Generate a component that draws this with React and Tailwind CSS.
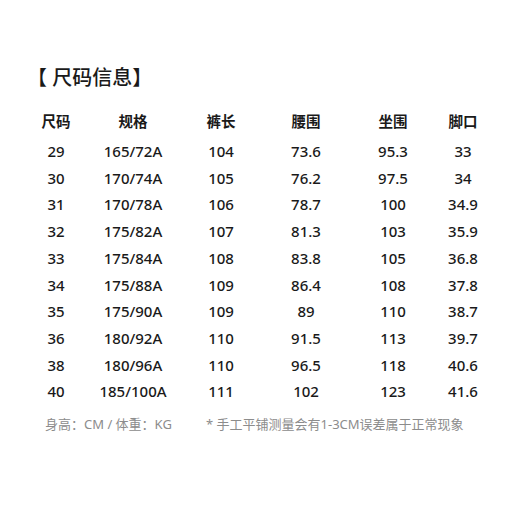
import React from "react";

const rows = [
    ["29", "165/72A", "104", "73.6", "95.3", "33"],
    ["30", "170/74A", "105", "76.2", "97.5", "34"],
    ["31", "170/78A", "106", "78.7", "100", "34.9"],
    ["32", "175/82A", "107", "81.3", "103", "35.9"],
    ["33", "175/84A", "108", "83.8", "105", "36.8"],
    ["34", "175/88A", "109", "86.4", "108", "37.8"],
    ["35", "175/90A", "109", "89", "110", "38.7"],
    ["36", "180/92A", "110", "91.5", "113", "39.7"],
    ["38", "180/96A", "110", "96.5", "118", "40.6"],
    ["40", "185/100A", "111", "102", "123", "41.6"],
];

const headers = ["尺码", "规格", "裤长", "腰围", "坐围", "脚口"];

const gridCols = "grid grid-cols-[72px_82px_94px_76px_98px_42px] ml-[20px] text-center";

const App = () => {
    return (
        <div
            className="w-[520px] h-[520px] bg-white text-[#1a1a1a] pt-[64px]"
            style={{ fontFamily: '"Noto Sans", "Noto Sans CJK SC", sans-serif' }}
        >
            <h1 className="ml-[27px] text-[20px] leading-[28px] font-medium">【 尺码信息】</h1>

            <div className={`${gridCols} mt-[16px] h-[28px] items-center text-[14.5px] font-semibold`}>
                {headers.map((h) => (
                    <div key={h}>{h}</div>
                ))}
            </div>

            <div className="mt-[2px]">
                {rows.map((row) => (
                    <div key={row[0]} className={`${gridCols} h-[26.7px] items-center text-[15px] font-medium`}>
                        {row.map((cell, i) => (
                            <div key={i}>{cell}</div>
                        ))}
                    </div>
                ))}
            </div>

            <div className="flex mt-[10px] ml-[45px] text-[13px] leading-[18px] text-[#8c8c8c]">
                <span className="w-[161px]">身高：CM / 体重：KG</span>
                <span>* 手工平铺测量会有1-3CM误差属于正常现象</span>
            </div>
        </div>
    );
};

export default App;
